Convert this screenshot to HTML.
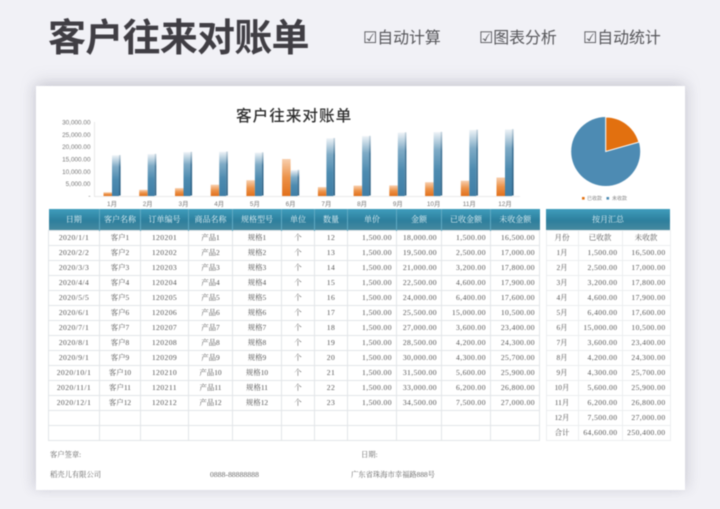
<!DOCTYPE html>
<html lang="zh">
<head>
<meta charset="utf-8">
<title>客户往来对账单</title>
<style>
html,body{margin:0;padding:0}
body{width:720px;height:509px;position:relative;overflow:hidden;background:#f1f1f6;font-family:"Liberation Sans","Noto Sans CJK SC",sans-serif}
.abs{position:absolute;white-space:nowrap}
.title{left:48px;top:15px;font-size:38px;line-height:48px;font-weight:700;color:#403e44;letter-spacing:-.75px}
.feat{top:28px;font-size:15.9px;line-height:22px;color:#555559}
.card{position:absolute;left:36px;top:86px;width:649px;height:404px;background:#fff;box-shadow:0 -5px 14px rgba(140,140,155,.26),5px 0 10px rgba(150,150,165,.12),-5px 0 10px rgba(150,150,165,.12)}
.blur{position:absolute;left:0;top:0;width:720px;height:509px;filter:blur(.4px)}
table{position:absolute;border-collapse:collapse;table-layout:fixed;font-family:"Liberation Serif","Noto Serif CJK SC",serif;font-size:7.6px;letter-spacing:.42px;color:#555;top:209px}
td,th{padding:0;text-align:center;border:1px solid #e2e5e8;height:14px;line-height:14px;overflow:hidden;white-space:nowrap}
th{height:21px;font-weight:400;font-size:8px;letter-spacing:0;color:#e4f2f6;background:linear-gradient(#3f9dbc,#2d7f9d 55%,#47899f);border:0;border-right:1px solid #5fa9c2}
th:last-child{border-right:0}
.r{text-align:right;padding-right:4px}
.z{font-size:7.4px;letter-spacing:0}
.sub td{letter-spacing:0}
#side td{border-color:#eceef0}
.foot{font-family:"Liberation Serif","Noto Serif CJK SC",serif;font-size:7.3px;line-height:10px;color:#666}
.leg{left:586px;top:195px;font-size:5px;line-height:8px;color:#888}
</style>
</head>
<body>
<div class="blur">
<div class="abs title">客户往来对账单</div>
<div class="abs feat" style="left:363px">☑自动计算</div>
<div class="abs feat" style="left:479px">☑图表分析</div>
<div class="abs feat" style="left:583px">☑自动统计</div>
<div class="card"></div>

<div class="abs" style="left:236px;top:106px;font-size:15.6px;line-height:22px;letter-spacing:1px;color:#2e2e2e;font-weight:500">客户往来对账单</div>

<svg class="abs" style="left:0;top:0" width="720" height="209" viewBox="0 0 720 209">
<defs>
<linearGradient id="b" x1="0" y1="0" x2="0" y2="1"><stop offset="0" stop-color="#eef3f7"/><stop offset=".28" stop-color="#7fabc6"/><stop offset=".6" stop-color="#4d8bb0"/><stop offset="1" stop-color="#3f7ea6"/></linearGradient>
<linearGradient id="s" x1="0" y1="0" x2="0" y2="1"><stop offset="0" stop-color="#c8d6e0"/><stop offset=".3" stop-color="#3f7396"/><stop offset="1" stop-color="#2d6184"/></linearGradient>
<linearGradient id="o" x1="0" y1="0" x2="0" y2="1"><stop offset="0" stop-color="#f8cfae"/><stop offset=".5" stop-color="#ec9248"/><stop offset="1" stop-color="#e2701b"/></linearGradient>
</defs>
<g font-family="Liberation Sans,sans-serif" font-size="6.4" fill="#777" text-anchor="end">
<text x="90.5" y="124.5">30,000.00</text>
<text x="90.5" y="136.8">25,000.00</text>
<text x="90.5" y="149.2">20,000.00</text>
<text x="90.5" y="161.5">15,000.00</text>
<text x="90.5" y="173.8">10,000.00</text>
<text x="90.5" y="186.2">5,000.00</text>
<text x="90.5" y="198">-</text>
</g>
<path d="M94.5 122V196.5H520" fill="none" stroke="#e3e3e3" stroke-width=".8"/>
<g fill="url(#o)">
<rect x="103.5" y="192.3" width="8.5" height="3.7"/>
<rect x="139.2" y="189.8" width="8.5" height="6.2"/>
<rect x="175" y="188.1" width="8.5" height="7.9"/>
<rect x="210.7" y="184.7" width="8.5" height="11.3"/>
<rect x="246.4" y="180.2" width="8.5" height="15.8"/>
<rect x="282.1" y="159" width="8.5" height="37"/>
<rect x="317.9" y="187.1" width="8.5" height="8.9"/>
<rect x="353.6" y="185.6" width="8.5" height="10.4"/>
<rect x="389.3" y="185.4" width="8.5" height="10.6"/>
<rect x="425.1" y="182.2" width="8.5" height="13.8"/>
<rect x="460.8" y="180.7" width="8.5" height="15.3"/>
<rect x="496.5" y="177.5" width="8.5" height="18.5"/>
</g>
<g fill="url(#b)">
<rect x="112" y="155.3" width="7" height="40.7"/>
<rect x="147.7" y="154.1" width="7" height="41.9"/>
<rect x="183.5" y="152.1" width="7" height="43.9"/>
<rect x="219.2" y="151.8" width="7" height="44.2"/>
<rect x="254.9" y="152.6" width="7" height="43.4"/>
<rect x="290.6" y="170.1" width="7" height="25.9"/>
<rect x="326.4" y="138.3" width="7" height="57.7"/>
<rect x="362.1" y="136.1" width="7" height="59.9"/>
<rect x="397.8" y="132.6" width="7" height="63.4"/>
<rect x="433.6" y="132.1" width="7" height="63.9"/>
<rect x="469.3" y="129.9" width="7" height="66.1"/>
<rect x="505" y="129.4" width="7" height="66.6"/>
</g>
<g fill="url(#s)">
<rect x="119" y="155" width="1.6" height="40.5"/>
<rect x="154.7" y="153.8" width="1.6" height="41.7"/>
<rect x="190.5" y="151.8" width="1.6" height="43.7"/>
<rect x="226.2" y="151.5" width="1.6" height="44"/>
<rect x="261.9" y="152.3" width="1.6" height="43.2"/>
<rect x="297.6" y="169.8" width="1.6" height="25.7"/>
<rect x="333.4" y="138" width="1.6" height="57.5"/>
<rect x="369.1" y="135.8" width="1.6" height="59.7"/>
<rect x="404.8" y="132.3" width="1.6" height="63.2"/>
<rect x="440.6" y="131.8" width="1.6" height="63.7"/>
<rect x="476.3" y="129.6" width="1.6" height="65.9"/>
<rect x="512" y="129.1" width="1.6" height="66.4"/>
</g>
<g font-family="Liberation Sans,Noto Sans CJK SC,sans-serif" font-size="6.4" fill="#777" text-anchor="middle">
<text x="112" y="206">1月</text><text x="147.7" y="206">2月</text><text x="183.5" y="206">3月</text><text x="219.2" y="206">4月</text><text x="254.9" y="206">5月</text><text x="290.6" y="206">6月</text><text x="326.4" y="206">7月</text><text x="362.1" y="206">8月</text><text x="397.8" y="206">9月</text><text x="433.6" y="206">10月</text><text x="469.3" y="206">11月</text><text x="505" y="206">12月</text>
</g>
<circle cx="605.7" cy="151.5" r="34.5" fill="#4d8bb3"/>
<path d="M605.7 151.5V117A34.5 34.5 0 0 1 638.9 142.1Z" fill="#e2700f" stroke="#fff" stroke-width="1"/>
<rect x="582" y="197" width="2.6" height="2.6" fill="#e2700f"/>
<rect x="606.5" y="197" width="2.6" height="2.6" fill="#4d8bb3"/>
</svg>
<div class="abs leg" style="left:587px">已收款</div>
<div class="abs leg" style="left:612px">未收款</div>

<table style="left:48px;width:491px">
<colgroup><col style="width:51px"><col style="width:41px"><col style="width:48px"><col style="width:44px"><col style="width:49px"><col style="width:33px"><col style="width:33px"><col style="width:49px"><col style="width:45px"><col style="width:49px"><col style="width:49px"></colgroup>
<tr><th>日期</th><th>客户名称</th><th>订单编号</th><th>商品名称</th><th>规格型号</th><th>单位</th><th>数量</th><th>单价</th><th>金额</th><th>已收金额</th><th>未收金额</th></tr>
<tr><td>2020/1/1</td><td class="z">客户1</td><td>120201</td><td class="z">产品1</td><td class="z">规格1</td><td class="z">个</td><td>12</td><td class="r">1,500.00</td><td class="r">18,000.00</td><td class="r">1,500.00</td><td class="r">16,500.00</td></tr>
<tr><td>2020/2/2</td><td class="z">客户2</td><td>120202</td><td class="z">产品2</td><td class="z">规格2</td><td class="z">个</td><td>13</td><td class="r">1,500.00</td><td class="r">19,500.00</td><td class="r">2,500.00</td><td class="r">17,000.00</td></tr>
<tr><td>2020/3/3</td><td class="z">客户3</td><td>120203</td><td class="z">产品3</td><td class="z">规格3</td><td class="z">个</td><td>14</td><td class="r">1,500.00</td><td class="r">21,000.00</td><td class="r">3,200.00</td><td class="r">17,800.00</td></tr>
<tr><td>2020/4/4</td><td class="z">客户4</td><td>120204</td><td class="z">产品4</td><td class="z">规格4</td><td class="z">个</td><td>15</td><td class="r">1,500.00</td><td class="r">22,500.00</td><td class="r">4,600.00</td><td class="r">17,900.00</td></tr>
<tr><td>2020/5/5</td><td class="z">客户5</td><td>120205</td><td class="z">产品5</td><td class="z">规格5</td><td class="z">个</td><td>16</td><td class="r">1,500.00</td><td class="r">24,000.00</td><td class="r">6,400.00</td><td class="r">17,600.00</td></tr>
<tr><td>2020/6/1</td><td class="z">客户6</td><td>120206</td><td class="z">产品6</td><td class="z">规格6</td><td class="z">个</td><td>17</td><td class="r">1,500.00</td><td class="r">25,500.00</td><td class="r">15,000.00</td><td class="r">10,500.00</td></tr>
<tr><td>2020/7/1</td><td class="z">客户7</td><td>120207</td><td class="z">产品7</td><td class="z">规格7</td><td class="z">个</td><td>18</td><td class="r">1,500.00</td><td class="r">27,000.00</td><td class="r">3,600.00</td><td class="r">23,400.00</td></tr>
<tr><td>2020/8/1</td><td class="z">客户8</td><td>120208</td><td class="z">产品8</td><td class="z">规格8</td><td class="z">个</td><td>19</td><td class="r">1,500.00</td><td class="r">28,500.00</td><td class="r">4,200.00</td><td class="r">24,300.00</td></tr>
<tr><td>2020/9/1</td><td class="z">客户9</td><td>120209</td><td class="z">产品9</td><td class="z">规格9</td><td class="z">个</td><td>20</td><td class="r">1,500.00</td><td class="r">30,000.00</td><td class="r">4,300.00</td><td class="r">25,700.00</td></tr>
<tr><td>2020/10/1</td><td class="z">客户10</td><td>120210</td><td class="z">产品10</td><td class="z">规格10</td><td class="z">个</td><td>21</td><td class="r">1,500.00</td><td class="r">31,500.00</td><td class="r">5,600.00</td><td class="r">25,900.00</td></tr>
<tr><td>2020/11/1</td><td class="z">客户11</td><td>120211</td><td class="z">产品11</td><td class="z">规格11</td><td class="z">个</td><td>22</td><td class="r">1,500.00</td><td class="r">33,000.00</td><td class="r">6,200.00</td><td class="r">26,800.00</td></tr>
<tr><td>2020/12/1</td><td class="z">客户12</td><td>120212</td><td class="z">产品12</td><td class="z">规格12</td><td class="z">个</td><td>23</td><td class="r">1,500.00</td><td class="r">34,500.00</td><td class="r">7,500.00</td><td class="r">27,000.00</td></tr>
<tr><td></td><td></td><td></td><td></td><td></td><td></td><td></td><td></td><td></td><td></td><td></td></tr>
<tr><td></td><td></td><td></td><td></td><td></td><td></td><td></td><td></td><td></td><td></td><td></td></tr>
</table>

<table id="side" style="left:545.5px;width:124px">
<colgroup><col style="width:32px"><col style="width:44px"><col style="width:48px"></colgroup>
<tr><th colspan="3">按月汇总</th></tr>
<tr class="sub"><td>月份</td><td>已收款</td><td>未收款</td></tr>
<tr><td class="z">1月</td><td class="r">1,500.00</td><td class="r">16,500.00</td></tr>
<tr><td class="z">2月</td><td class="r">2,500.00</td><td class="r">17,000.00</td></tr>
<tr><td class="z">3月</td><td class="r">3,200.00</td><td class="r">17,800.00</td></tr>
<tr><td class="z">4月</td><td class="r">4,600.00</td><td class="r">17,900.00</td></tr>
<tr><td class="z">5月</td><td class="r">6,400.00</td><td class="r">17,600.00</td></tr>
<tr><td class="z">6月</td><td class="r">15,000.00</td><td class="r">10,500.00</td></tr>
<tr><td class="z">7月</td><td class="r">3,600.00</td><td class="r">23,400.00</td></tr>
<tr><td class="z">8月</td><td class="r">4,200.00</td><td class="r">24,300.00</td></tr>
<tr><td class="z">9月</td><td class="r">4,300.00</td><td class="r">25,700.00</td></tr>
<tr><td class="z">10月</td><td class="r">5,600.00</td><td class="r">25,900.00</td></tr>
<tr><td class="z">11月</td><td class="r">6,200.00</td><td class="r">26,800.00</td></tr>
<tr><td class="z">12月</td><td class="r">7,500.00</td><td class="r">27,000.00</td></tr>
<tr><td class="z">合计</td><td class="r">64,600.00</td><td class="r">250,400.00</td></tr>
</table>

<div class="abs foot" style="left:50px;top:450px">客户签章:</div>
<div class="abs foot" style="left:361px;top:450px">日期:</div>
<div class="abs foot" style="left:50px;top:470px">稻壳儿有限公司</div>
<div class="abs foot" style="left:210px;top:470px;font-size:7.6px;letter-spacing:.07px">0888-88888888</div>
<div class="abs foot" style="left:351px;top:470px">广东省珠海市幸福路888号</div>
</div>
</body>
</html>
